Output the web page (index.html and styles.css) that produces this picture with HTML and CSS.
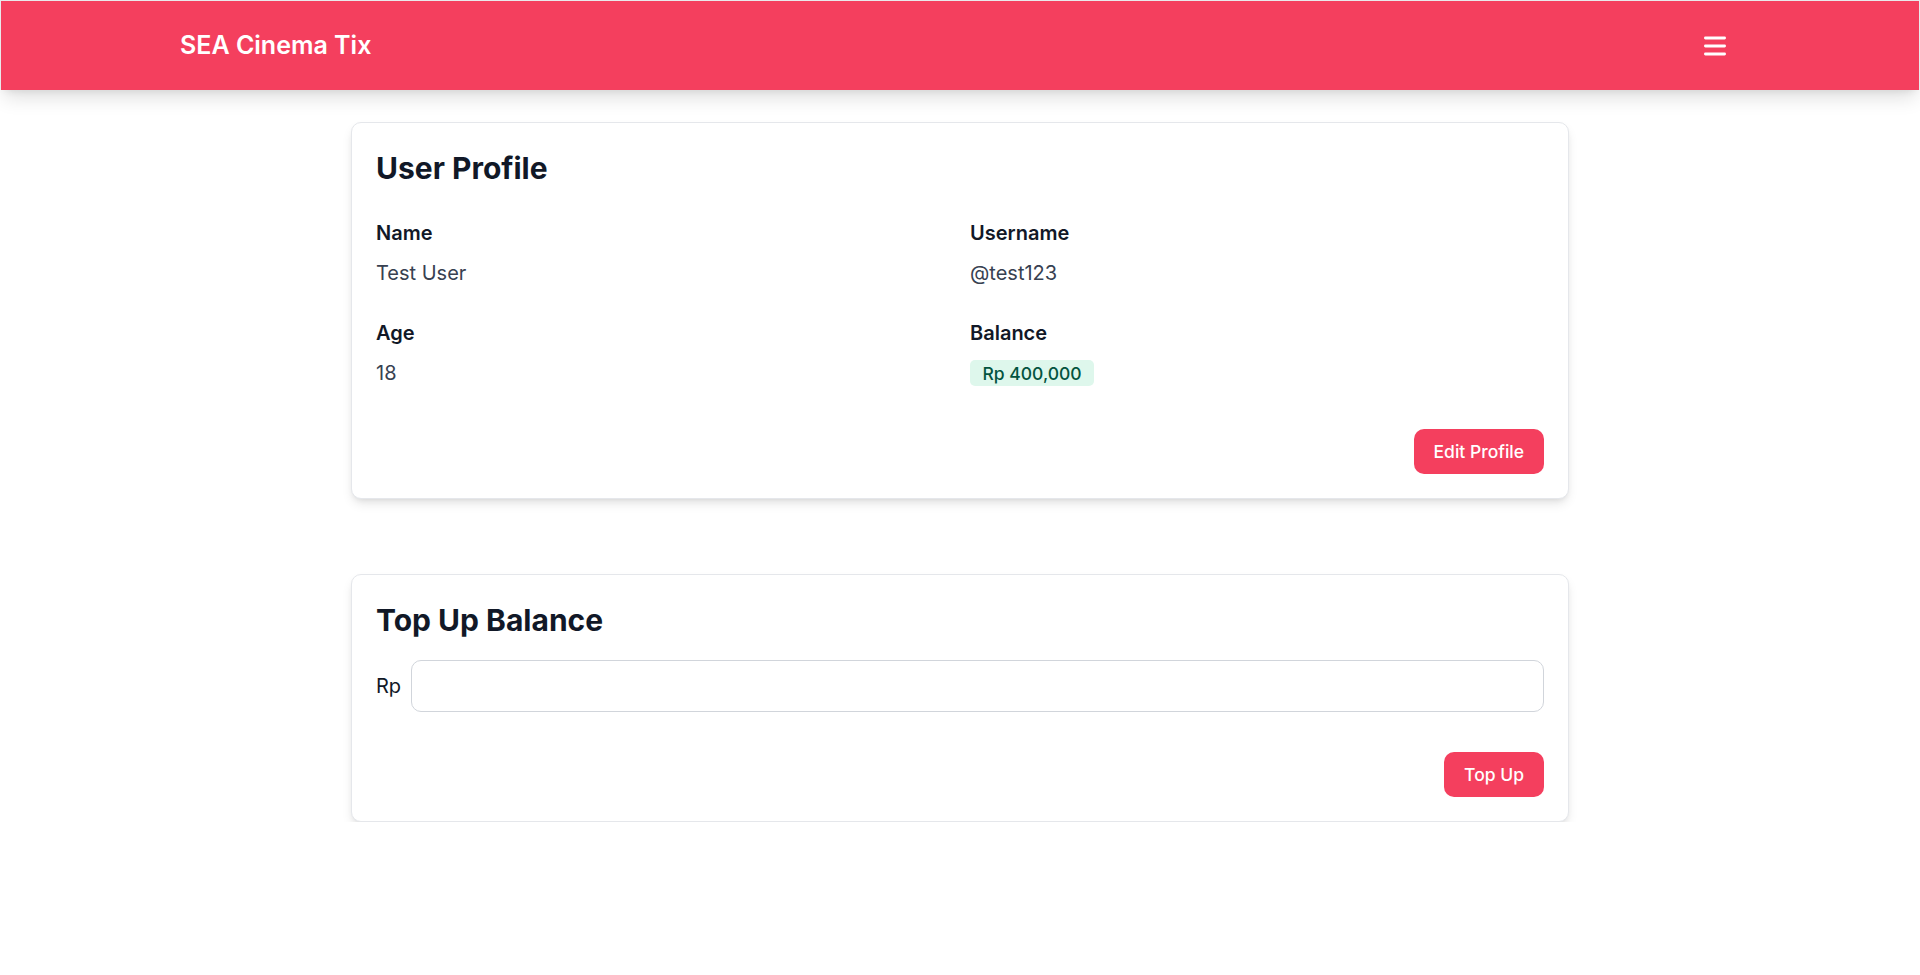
FILE: index.html
```html
<!DOCTYPE html>
<html lang="en">
<head>
<meta charset="utf-8">
<title>SEA Cinema Tix</title>
<link rel="stylesheet" href="styles.css">
</head>
<body>
<header class="navbar">
  <div class="nav-inner">
    <a class="brand" href="#">SEA Cinema Tix</a>
    <button class="menu-btn" type="button" aria-label="Open menu">
      <svg class="menu-icon" width="22" height="20" viewBox="0 0 22 20" fill="none" stroke="#fff" stroke-width="2.8" stroke-linecap="round">
        <path d="M1.4 2h19.2M1.4 10h19.2M1.4 18h19.2"/>
      </svg>
    </button>
  </div>
</header>

<main class="page">
  <section class="card">
    <h2 class="card-title">User Profile</h2>
    <dl class="info-grid">
      <div class="info-item">
        <dt class="info-label">Name</dt>
        <dd class="info-value">Test User</dd>
      </div>
      <div class="info-item">
        <dt class="info-label">Username</dt>
        <dd class="info-value">@test123</dd>
      </div>
      <div class="info-item">
        <dt class="info-label">Age</dt>
        <dd class="info-value">18</dd>
      </div>
      <div class="info-item">
        <dt class="info-label">Balance</dt>
        <dd class="info-value"><span class="badge">Rp 400,000</span></dd>
      </div>
    </dl>
    <div class="card-actions">
      <button class="btn" type="button">Edit Profile</button>
    </div>
  </section>

  <section class="card card-topup">
    <h2 class="card-title">Top Up Balance</h2>
    <div class="topup-row">
      <label class="currency" for="amount">Rp</label>
      <input class="amount-input" id="amount" type="text">
    </div>
    <div class="card-actions">
      <button class="btn" type="button">Top Up</button>
    </div>
  </section>
</main>
</body>
</html>
```

FILE: styles.css
```css
* {
  box-sizing: border-box;
}

html, body {
  margin: 0;
  padding: 0;
  background: #ffffff;
}

body {
  font-family: Inter, "Noto Sans", "Liberation Sans", sans-serif;
  color: #111827;
}

.navbar {
  background: #f43f5e;
  border: 1px solid #e9e9eb;
  border-bottom: none;
  height: 90px;
  box-shadow: 0 12px 18px -4px rgba(0, 0, 0, 0.12), 0 5px 8px -5px rgba(0, 0, 0, 0.1);
  position: relative;
  z-index: 1;
}

.nav-inner {
  max-width: 1600px;
  margin: 0 auto;
  padding: 0 20px;
  height: 100%;
  display: flex;
  align-items: center;
  justify-content: space-between;
}

.brand {
  color: #ffffff;
  text-decoration: none;
  font-size: 25px;
  font-weight: 600;
  line-height: 35px;
  white-space: nowrap;
}

.menu-btn {
  width: 50px;
  height: 50px;
  padding: 0;
  border: none;
  background: transparent;
  display: inline-flex;
  align-items: center;
  justify-content: center;
  border-radius: 10px;
  cursor: pointer;
}

.menu-icon {
  display: block;
}

.page {
  padding-top: 32px;
  display: flex;
  flex-direction: column;
  align-items: center;
}

.card {
  width: 1218px;
  background: #ffffff;
  border: 1px solid #e5e7eb;
  border-radius: 10px;
  box-shadow: 0 6px 12px -2px rgba(0, 0, 0, 0.11), 0 3px 6px -3px rgba(0, 0, 0, 0.1);
  padding: 24.5px 24px 24px;
}

.card-topup {
  margin-top: 75.5px;
}

.card-title {
  margin: 0;
  font-size: 30px;
  line-height: 40px;
  font-weight: 700;
  color: #111827;
}

.info-grid {
  margin: 30px 0 0;
  display: grid;
  grid-template-columns: 1fr 1fr;
  column-gap: 20px;
  row-gap: 30px;
}

.info-item {
  display: flex;
  flex-direction: column;
  gap: 10px;
}

.info-label {
  font-size: 20px;
  line-height: 30px;
  font-weight: 600;
  color: #111827;
}

.info-value {
  margin: 0;
  font-size: 20px;
  line-height: 30px;
  font-weight: 400;
  color: #374151;
}

.badge {
  display: inline;
  background: #def7ec;
  color: #03543f;
  font-size: 17.5px;
  font-weight: 500;
  padding: 2.5px 12.5px;
  border-radius: 5px;
}

.card-actions {
  display: flex;
  justify-content: flex-end;
  margin-top: 40px;
}

.btn {
  font-family: inherit;
  background: #f43f5e;
  color: #ffffff;
  border: none;
  border-radius: 10px;
  font-size: 17.5px;
  line-height: 25px;
  font-weight: 500;
  padding: 10px 20px;
  cursor: pointer;
}

.topup-row {
  margin-top: 20px;
  display: flex;
  align-items: center;
  gap: 10px;
}

.currency {
  font-size: 20px;
  line-height: 30px;
  color: #111827;
}

.amount-input {
  flex: 1;
  height: 52px;
  border: 1px solid #d1d5db;
  border-radius: 10px;
  background: #ffffff;
  font-family: inherit;
  font-size: 17.5px;
  padding: 12.5px;
  color: #111827;
}
```
